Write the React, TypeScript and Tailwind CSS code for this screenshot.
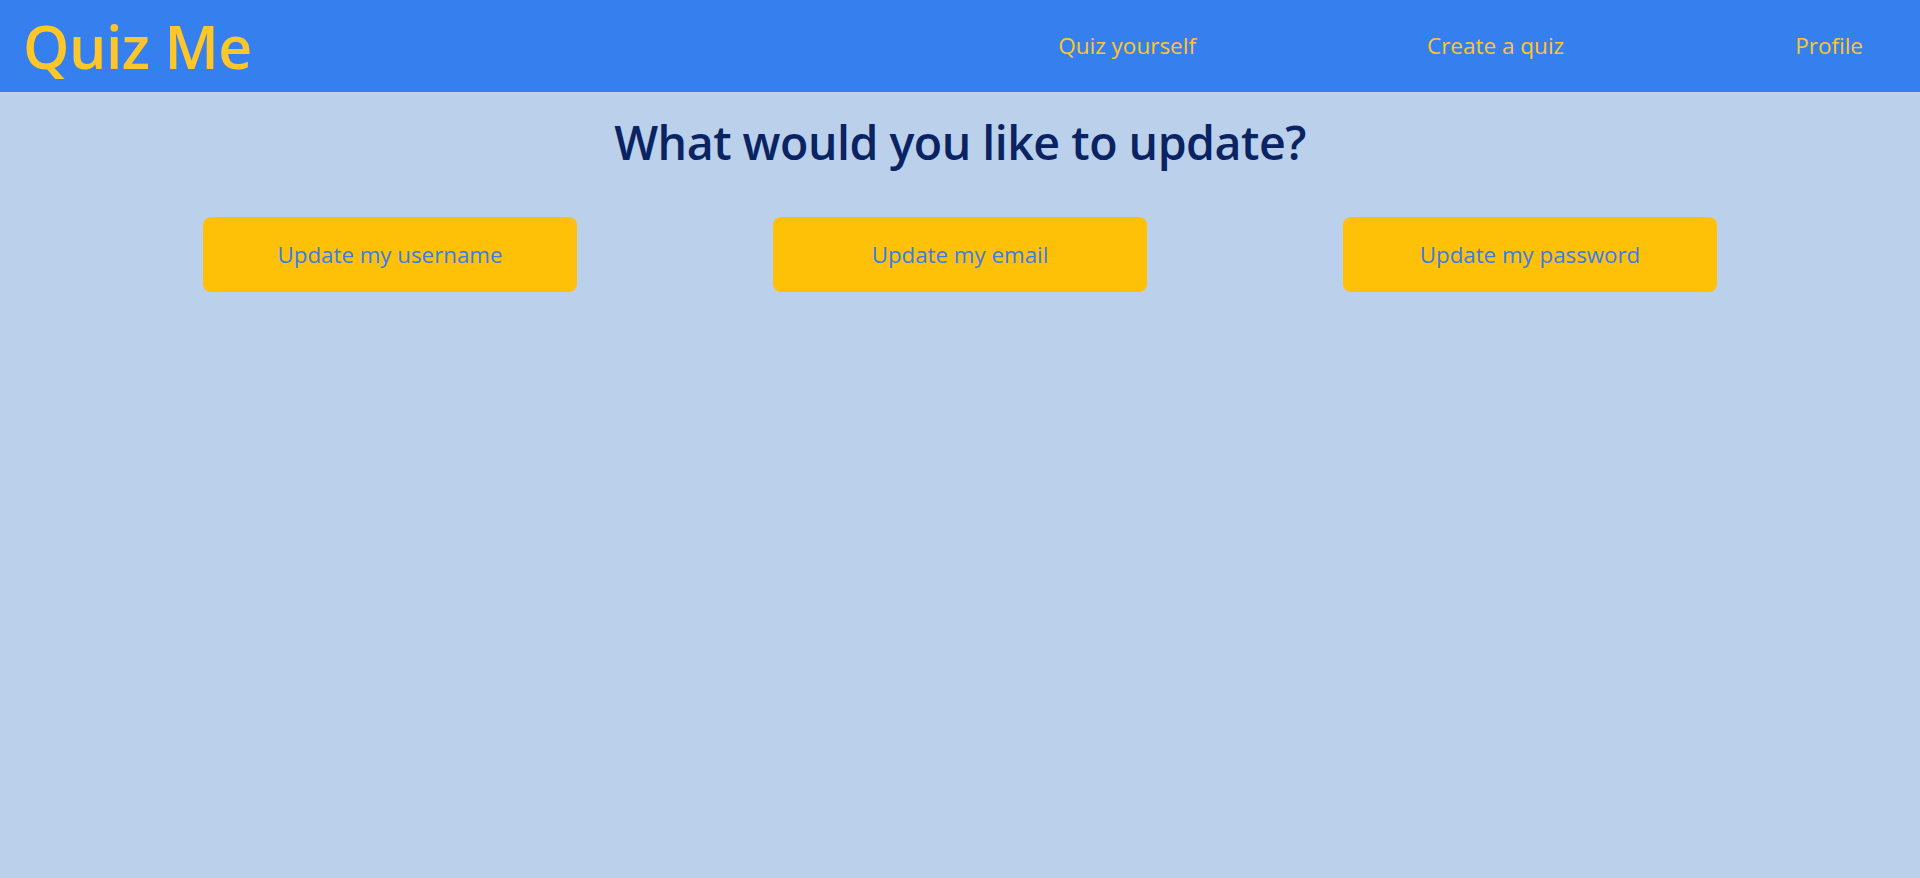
export default function App() {
  const buttons = ["Update my username", "Update my email", "Update my password"];

  return (
    <div className="min-h-screen bg-[#bad0eb]" style={{ fontFamily: '"Open Sans", "Noto Sans", sans-serif' }}>
      <nav className="flex h-[92px] items-center justify-between bg-[#367fef] pl-[23px] pr-[57px]">
        <a href="#" className="text-[59px] font-semibold leading-none tracking-[-0.5px] text-[#ffc629]">
          Quiz Me
        </a>
        <ul className="flex items-center gap-[231px] text-[22.5px] text-[#ffc629]">
          <li>Quiz yourself</li>
          <li>Create a quiz</li>
          <li>Profile</li>
        </ul>
      </nav>

      <main className="flex flex-col items-center">
        <h1 className="mt-[16px] text-[46.5px] font-semibold tracking-[-0.5px] text-[#0a2362]">
          What would you like to update?
        </h1>
        <div className="mt-[39px] grid w-[1710px] grid-cols-3">
          {buttons.map((label) => (
            <div key={label} className="flex justify-center">
              <button className="h-[75px] w-[374px] rounded-lg bg-[#ffc107] text-[22.3px] text-[#3a7bec]">
                {label}
              </button>
            </div>
          ))}
        </div>
      </main>
    </div>
  );
}
